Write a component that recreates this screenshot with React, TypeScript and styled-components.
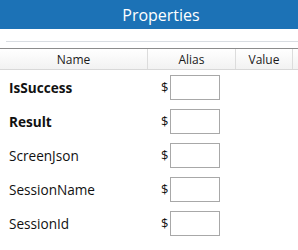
import styled, { createGlobalStyle } from "styled-components";

const GlobalStyle = createGlobalStyle`
    body {
        margin: 0;
        background: #ffffff;
        font-family: "Open Sans", "Noto Sans", sans-serif;
    }
`;

const Panel = styled.section`
    width: 298px;
    height: 250px;
    display: flex;
    flex-direction: column;
    background: #ffffff;
    overflow: hidden;
`;

const TitleBar = styled.header`
    height: 29px;
    display: flex;
    align-items: center;
    justify-content: center;
    padding-left: 24px;
    background-color: #1c72b6;
    color: #ffffff;
    font-size: 16px;
`;

const Divider = styled.div`
    margin: 12px 0 0 6px;
    height: 1px;
    background-color: #d9dde2;
`;

const GridHeader = styled.div`
    margin-top: 6px;
    height: 20px;
    display: grid;
    grid-template-columns: 148px 88px 57px 1fr;
    border-top: 1px solid #8c8c8c;
    border-bottom: 1px solid #d8d8d8;
    background: linear-gradient(#ffffff, #f2f2f2);
`;

const HeaderCell = styled.div`
    display: flex;
    align-items: center;
    justify-content: center;
    border-right: 1px solid #dcdcdc;
    font-size: 12px;
    color: #1a1a1a;
`;

const Rows = styled.div`
    display: flex;
    flex-direction: column;
`;

const Row = styled.div`
    height: 34px;
    display: grid;
    grid-template-columns: 148px 88px 1fr;
    align-items: center;
`;

const NameCell = styled.div<{ $bold?: boolean }>`
    padding-left: 9px;
    font-size: 13.6px;
    font-weight: ${(p) => (p.$bold ? 700 : 400)};
    color: #111111;
`;

const AliasCell = styled.div`
    display: flex;
    align-items: center;
    gap: 2px;
    padding-left: 13px;
    font-size: 13px;
    color: #111111;
`;

const AliasInput = styled.input`
    width: 50px;
    height: 25px;
    box-sizing: border-box;
    border: 1px solid #a8a8a8;
    padding: 0 3px;
    font-family: inherit;
    font-size: 12px;
    outline: none;
`;

const props = [
    { name: "IsSuccess", bold: true },
    { name: "Result", bold: true },
    { name: "ScreenJson", bold: false },
    { name: "SessionName", bold: false },
    { name: "SessionId", bold: false },
];

export default function App() {
    return (
        <>
            <GlobalStyle />
            <Panel>
                <TitleBar>Properties</TitleBar>
                <Divider />
                <GridHeader>
                    <HeaderCell>Name</HeaderCell>
                    <HeaderCell>Alias</HeaderCell>
                    <HeaderCell>Value</HeaderCell>
                    <div />
                </GridHeader>
                <Rows>
                    {props.map((p) => (
                        <Row key={p.name}>
                            <NameCell $bold={p.bold}>{p.name}</NameCell>
                            <AliasCell>
                                $<AliasInput />
                            </AliasCell>
                            <div />
                        </Row>
                    ))}
                </Rows>
            </Panel>
        </>
    );
}
